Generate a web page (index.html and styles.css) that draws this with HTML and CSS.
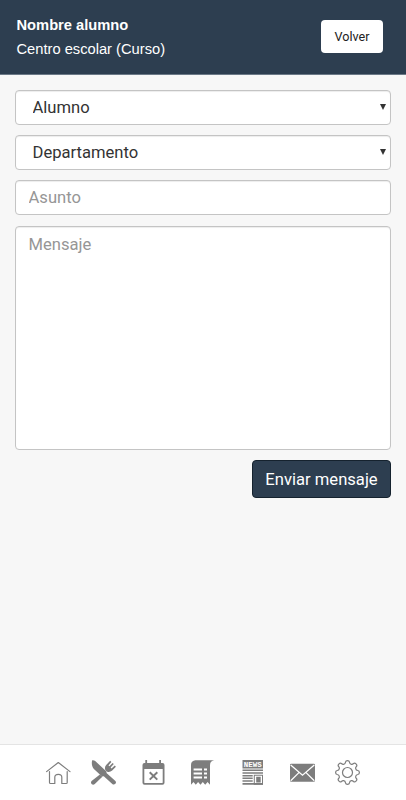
FILE: index.html
```html
<!DOCTYPE html>
<html lang="es">
<head>
  <meta charset="UTF-8">
  <meta name="viewport" content="width=device-width, initial-scale=1.0">
  <title>Enviar mensaje</title>
  <link rel="stylesheet" href="styles.css">
</head>
<body>
  <header class="header">
    <div class="student">
      <h1>Nombre alumno</h1>
      <p>Centro escolar (Curso)</p>
    </div>
    <button type="button" class="btn-back">Volver</button>
  </header>

  <main class="content">
    <form class="message-form">
      <div class="select-group">
        <select class="field" aria-label="Alumno">
          <option>Alumno</option>
        </select>
        <svg class="arrow" viewBox="0 0 6 6"><path d="M0 0h6L3 6z"/></svg>
      </div>
      <div class="select-group">
        <select class="field" aria-label="Departamento">
          <option>Departamento</option>
        </select>
        <svg class="arrow" viewBox="0 0 6 6"><path d="M0 0h6L3 6z"/></svg>
      </div>
      <input type="text" class="field" placeholder="Asunto">
      <textarea class="field" placeholder="Mensaje"></textarea>
      <button type="submit" class="btn-send">Enviar mensaje</button>
    </form>
  </main>

  <nav class="navbar">
    <!-- Inicio -->
    <a class="nav-item" aria-label="Inicio">
      <svg viewBox="0 0 25 25" class="line">
        <path d="M.6 11.6 12.3 2.5 24 11.6M3.5 11.5v10.9q0 1.1 1.1 1.1h4.2v-6.2q0-3 3.5-3t3.5 3v6.2h4.3q1.1 0 1.1-1.1V11.5"/>
      </svg>
    </a>
    <!-- Comedor -->
    <a class="nav-item" aria-label="Comedor">
      <svg viewBox="0 0 25 25">
        <path d="M1.2.3C2 0 3.4.3 4.2 1L15.500 11.600v1.400l8.900 8q1.200 1.300 0 2.800-1.600 1.500-3.100.2L12.800 16.200 11 16.500 2.900 9.100C1 6.600.3 3.200 1.200.3z"/>
        <path d="M8.900 14.600.6 21q-1.200 1.400 0 2.900 1.600 1.500 3.200 0l7.500-7.100zM14.400 10.200q-1.300-3.200 1-5.500L19.200.8l1.200 1.100-2.900 3.500.9.900L21.600 3l1.200 1.100-3.200 3.500.9.900 3.300-2.900 1.100 1.100-3.700 3.800q-2.200 2-4.900 1.300z"/>
      </svg>
    </a>
    <!-- Calendario -->
    <a class="nav-item" aria-label="Calendario">
      <svg viewBox="0 0 25 25">
        <path fill-rule="evenodd" d="M4.300 0h1.800v3h12.100V0H20v3h1.500Q23.500 3 23.500 5v17.800q0 2-2 2h-18q-2 0-2-2V5q0-2 2-2h.8zM3.300 9v13.200q0 .9.900.9h16.600q.9 0 .9-.9V9z"/>
        <path class="cross" d="m8.700 12.200 7.600 7.400m0-7.400-7.600 7.400"/>
      </svg>
    </a>
    <!-- Recibos -->
    <a class="nav-item" aria-label="Recibos">
      <svg viewBox="0 0 25 25">
        <path d="M4.400.2h18.800q-4.200.6-4.200 5.200v19.300l-2.400-2.600-2.400 2.600-2.400-2.600-2.300 2.600-2.400-2.600-2.300 2.600-2.300-2.600L0 24.700V5Q0 .9 4.400.2z"/>
        <path class="cut" d="M2.600 9.500h8.400m2 0h3M2.600 13.500h8.400m2 0h3M2.600 17.500h8.400m2 0h3"/>
      </svg>
    </a>
    <!-- Noticias -->
    <a class="nav-item" aria-label="Noticias">
      <svg viewBox="0 0 25 25">
        <path d="M1.500 0H22v8.600H1.500zM1.500 9.500H22V11H1.500zM1.500 12.200H22v1.500H1.500zM1.500 14.900h10.200v1.500H1.500zM1.500 17.600h10.200v1.500H1.500zM1.500 20.300h10.200v1.500H1.500zM1.500 23H22v1.700H1.500z"/>
        <path fill-rule="evenodd" d="M12.800 14.700H22v10h-9.200zm1 1v8H21v-8z"/>
        <path d="M15.200 16.800h4.500v5.800h-4.500z"/>
        <text class="news" x="11.700" y="7" textLength="18" lengthAdjust="spacingAndGlyphs">NEWS</text>
      </svg>
    </a>
    <!-- Mensajes -->
    <a class="nav-item" aria-label="Mensajes">
      <svg viewBox="0 0 25 25">
        <rect x="-1" y="3.700" width="25" height="18" rx="1.200"/>
        <path class="flap" d="m-.3 5 11.800 10.200L23.300 5M-.3 20.700l8.500-8.300m15.100 8.300-8.500-8.300"/>
      </svg>
    </a>
    <!-- Ajustes -->
    <a class="nav-item" aria-label="Ajustes">
      <svg viewBox="0 0 25 25" class="line gear">
        <path d="M10.500 2.200q.3-1.600 2-1.600t2 1.600q.2 1.800 1.900 2.100 1.200.2 2.100-.8 1.200-1 2.500.3 1.500 1.500.4 2.700-1 1-.7 2.100.3 1.700 2.100 1.900 1.600.3 1.600 2t-1.600 2q-1.800.2-2.100 1.900-.3 1.100.7 2.100 1.100 1.200-.4 2.700-1.300 1.300-2.500.3-.9-1-2.100-.8-1.700.3-1.900 2.100-.3 1.600-2 1.600t-2-1.600q-.2-1.800-1.900-2.100-1.200-.2-2.100.8-1.200 1-2.500-.3-1.500-1.500-.4-2.700 1-1 .7-2.100-.3-1.700-2.100-1.900-1.600-.3-1.600-2t1.600-2q1.800-.2 2.100-1.900.3-1.100-.7-2.100-1.100-1.200.4-2.700 1.300-1.300 2.500-.3.900 1 2.100.8 1.700-.3 1.900-2.100z"/>
        <circle cx="12.500" cy="12.500" r="5"/>
      </svg>
    </a>
  </nav>
</body>
</html>
```

FILE: styles.css
```css
:root {
  --primary: #2d3e50;
  --light: #f7f7f7;
  --border: #c4c4c4;
  --icon: #7d7d7d;
}

* {
  box-sizing: border-box;
  margin: 0;
  padding: 0;
}

body {
  display: flex;
  flex-direction: column;
  height: 100vh;
  overflow: hidden;
  background-color: var(--light);
  font-family: Roboto, sans-serif;
}

.header {
  display: flex;
  justify-content: space-between;
  align-items: center;
  height: 75px;
  padding: 0 23px 1px 16.5px;
  background-color: var(--primary);
  border-bottom: 1px solid #6b7987;
  color: #fff;
  font-family: "Liberation Sans", Arial, sans-serif;
}

.student {
  line-height: 24px;
}

.student h1 {
  font-size: 14.7px;
}

.student p {
  font-size: 14.7px;
}

.btn-back {
  width: 62px;
  height: 33px;
  border: none;
  border-radius: 4px;
  background-color: #fff;
  color: #222;
  font-family: Roboto, sans-serif;
  font-size: 12.6px;
}

.content {
  flex: 1;
  padding: 14.6px 15px 0;
}

.message-form {
  display: flex;
  flex-direction: column;
  gap: 10.4px;
}

.select-group {
  position: relative;
  display: flex;
}

.field {
  display: block;
  width: 376px;
  height: 35px;
  padding: 0 12.5px;
  border: 1px solid var(--border);
  border-radius: 4px;
  background-color: #fff;
  box-shadow: inset 0 1px 1px rgba(0, 0, 0, 0.075);
  color: #333;
  font-family: Roboto, sans-serif;
  font-size: 16.6px;
  appearance: none;
  resize: none;
}

.field::placeholder {
  color: #969696;
}

select.field {
  padding: 0 16.5px;
}

textarea.field {
  height: 224px;
  padding-top: 8px;
}

/* Lies over the right end of the select */
.arrow {
  position: absolute;
  top: 14px;
  right: 5.5px;
  width: 6px;
  height: 6px;
  fill: #333;
}

.btn-send {
  align-self: flex-end;
  width: 139px;
  height: 38px;
  border: 1px solid #15222e;
  border-radius: 4px;
  background-color: var(--primary);
  color: #fff;
  font-family: Roboto, sans-serif;
  font-size: 16.6px;
}

.navbar {
  display: flex;
  gap: 20px;
  height: 56px;
  padding: 15px 0 0 46px;
  background-color: #fff;
  border-top: 1px solid #e4e4e4;
}

.nav-item {
  width: 25px;
  height: 25px;
}

.nav-item:nth-child(n+3) {
  margin-left: 5px;
}

.nav-item:last-child {
  margin-left: -1px;
}

.nav-item svg {
  display: block;
  width: 25px;
  height: 25px;
  overflow: visible;
  fill: var(--icon);
}

.nav-item .line {
  fill: none;
  stroke: var(--icon);
  stroke-width: 1.2;
  stroke-linecap: round;
  stroke-linejoin: round;
}

.nav-item .cross {
  stroke: var(--icon);
  stroke-width: 2;
}

.nav-item .cut,
.nav-item .flap {
  fill: none;
  stroke: #fff;
  stroke-width: 1.3;
}

.nav-item .cut {
  stroke-width: 1.8;
}

.news {
  fill: #fff;
  font-family: "Liberation Mono", monospace;
  font-size: 7.5px;
  font-weight: bold;
  text-anchor: middle;
}
```
